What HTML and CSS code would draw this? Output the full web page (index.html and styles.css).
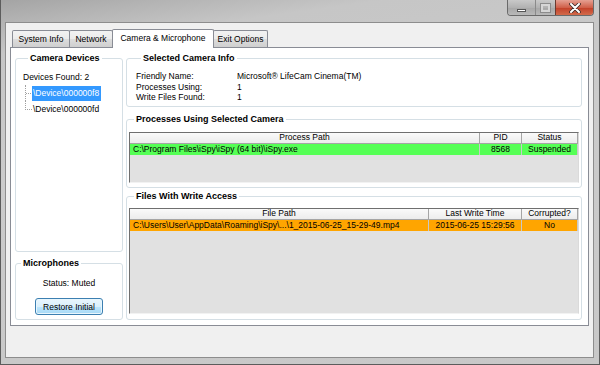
FILE: index.html
```html
<!DOCTYPE html>
<html>
<head>
<meta name="viewport" content="width=device-width, initial-scale=1">
<title>Camera &amp; Microphone</title>
<link rel="stylesheet" href="styles.css">
</head>
<body>
<div class="window">
  <div class="titlebar">
    <div class="caption">
      <span class="cap min"><i></i></span>
      <span class="cap max"><i></i></span>
      <span class="cap close">
        <svg width="12" height="10" viewBox="0 0 12 10"><path d="M2 1 L10 9 M10 1 L2 9" stroke="#3b2a28" stroke-width="3.6" stroke-linecap="round"/><path d="M2 1 L10 9 M10 1 L2 9" stroke="#fff" stroke-width="2" stroke-linecap="round"/></svg>
      </span>
    </div>
  </div>
  <div class="client">
    <div class="tabs">
      <span class="tab t1">System Info</span>
      <span class="tab t2">Network</span>
      <span class="tab active">Camera &amp; Microphone</span>
      <span class="tab t4">Exit Options</span>
    </div>
    <div class="tabpage">
      <div class="leftcol">
        <fieldset class="group devices">
          <legend>Camera Devices</legend>
          <div class="found">Devices Found: 2</div>
          <ul class="tree">
            <li class="sel"><span>\Device\000000f8</span></li>
            <li><span>\Device\000000fd</span></li>
          </ul>
        </fieldset>
        <fieldset class="group mics">
          <legend>Microphones</legend>
          <div class="status">Status: Muted</div>
          <button type="button" class="btn">Restore Initial</button>
        </fieldset>
      </div>
      <div class="rightcol">
        <fieldset class="group info">
          <legend>Selected Camera Info</legend>
          <div class="props">
            <span>Friendly Name:</span><span>Microsoft&reg; LifeCam Cinema(TM)</span>
            <span>Processes Using:</span><span>1</span>
            <span>Write Files Found:</span><span>1</span>
          </div>
        </fieldset>
        <fieldset class="group procs">
          <legend>Processes Using Selected Camera</legend>
          <div class="list">
            <table>
              <colgroup><col><col style="width:42px"><col style="width:56px"></colgroup>
              <tr><th>Process Path</th><th>PID</th><th>Status</th></tr>
              <tr class="green"><td class="l">C:\Program Files\iSpy\iSpy (64 bit)\iSpy.exe</td><td>8568</td><td>Suspended</td></tr>
            </table>
          </div>
        </fieldset>
        <fieldset class="group files">
          <legend>Files With Write Access</legend>
          <div class="list">
            <table>
              <colgroup><col><col style="width:93px"><col style="width:56px"></colgroup>
              <tr><th>File Path</th><th>Last Write Time</th><th>Corrupted?</th></tr>
              <tr class="orange"><td class="l">C:\Users\User\AppData\Roaming\iSpy\...\1_2015-06-25_15-29-49.mp4</td><td>2015-06-25 15:29:56</td><td>No</td></tr>
            </table>
          </div>
        </fieldset>
      </div>
    </div>
  </div>
</div>
</body>
</html>
```

FILE: styles.css
```css
* {
  box-sizing: border-box;
}

body {
  margin: 0;
  font-family: "Liberation Sans", Arial, sans-serif;
  font-size: 8.5px;
  color: #000;
  background: #fff;
}

.window {
  width: 600px;
  height: 365px;
  display: flex;
  flex-direction: column;
  border: 1px solid #5c5c5c;
  border-top: none;
  background: linear-gradient(172deg, #a4a4a4 0%, #b3b3b3 5%, #c6c6c6 12%, #cbcbcb 40%, #c8c8c8 100%);
}

.titlebar {
  height: 22px;
  display: flex;
  justify-content: flex-end;
  padding-right: 5px;
}

.caption {
  display: flex;
  height: 16px;
  border: 1px solid #6a6a6a;
  border-top: none;
  border-radius: 0 0 4px 4px;
  overflow: hidden;
}

.cap {
  display: flex;
  align-items: center;
  justify-content: center;
  height: 100%;
  border-left: 1px solid #8a8a8a;
}

.cap.min {
  width: 27px;
  border-left: none;
  background: linear-gradient(#c9c9c9, #b2b2b2 50%, #a6a6a6 51%, #b9b9b9);
}

.cap.min i {
  width: 9px;
  height: 3px;
  margin-top: 5px;
  background: #fff;
  border: 1px solid #555;
}

.cap.max {
  width: 20px;
  background: linear-gradient(#c9c9c9, #b2b2b2 50%, #a6a6a6 51%, #b9b9b9);
}

.cap.max i {
  width: 9px;
  height: 8px;
  border: 2px solid #d6d6d6;
  outline: 1px solid #8c8c8c;
}

.cap.close {
  width: 38px;
  border-left-color: #6a3a30;
  background: linear-gradient(#e5a092, #d0604a 50%, #c23f28 51%, #d26a4a);
}

.client {
  flex: 1;
  display: flex;
  flex-direction: column;
  margin: 0 5px 6px 4px;
  border: 1px solid #8d8d8d;
  background: #f0f0f0;
}

.tabs {
  display: flex;
  align-items: flex-end;
  height: 24px;
  padding: 6px 0 0 6px;
}

.tab {
  height: 17px;
  display: flex;
  align-items: center;
  justify-content: center;
  border: 1px solid #898c95;
  border-bottom: none;
  margin-right: -1px;
  background: linear-gradient(#f2f2f2, #ebebeb 50%, #dddddd 51%, #cfcfcf);
  border-radius: 2px 2px 0 0;
}

.tab.t1 {
  width: 58px;
}

.tab.t2 {
  width: 44px;
}

.tab.t4 {
  width: 55px;
}

.tab.active {
  width: 102px;
  height: 19px;
  margin-bottom: -1px;
  position: relative;
  z-index: 1;
  background: #fff;
  padding-bottom: 2px;
}

.tabpage {
  flex: 1;
  display: flex;
  gap: 3px;
  margin: 0 4px 31px 4px;
  padding: 4px 6px 5px 4px;
  border: 1px solid #898c95;
  background: #fff;
}

.group {
  margin: 0;
  padding: 0;
  border: 1px solid #d5dfe5;
  border-radius: 3px;
  min-width: 0;
}

.group legend {
  margin-left: 5px;
  padding: 0 2px;
  font-size: 9px;
  font-weight: bold;
  line-height: 12px;
}

.leftcol {
  width: 108px;
  display: flex;
  flex-direction: column;
  gap: 5px;
}

.devices {
  flex: 1;
  padding: 7px 0 0 7px;
}

.found {
  line-height: 12px;
}

.tree {
  list-style: none;
  margin: 2px 0 0 2px;
  padding: 0;
}

.tree li {
  display: flex;
  align-items: center;
  height: 16px;
}

.tree li::before {
  content: "";
  width: 6px;
  align-self: stretch;
  border-left: 1px dotted #a0a0a0;
  background: linear-gradient(90deg, #a0a0a0 50%, transparent 50%) 0 50% / 2px 1px repeat-x;
}

.tree li:last-child::before {
  align-self: flex-start;
  height: 8px;
  background: none;
  border-bottom: 1px dotted #a0a0a0;
}

.tree li span {
  height: 15px;
  display: flex;
  align-items: center;
  padding: 0 2px 0 1px;
}

.tree li.sel span {
  background: #3399ff;
  color: #fff;
}

.mics {
  height: 63px;
  display: flex;
  flex-direction: column;
  align-items: center;
  padding-top: 8px;
}

.status {
  line-height: 12px;
}

.btn {
  margin-top: 9px;
  width: 68px;
  height: 17px;
  padding: 0;
  font-family: inherit;
  font-size: 8.5px;
  color: #000;
  border: 1px solid #3c7fb1;
  border-radius: 3px;
  background: linear-gradient(#eaf6fd, #d9f0fc 50%, #bee6fd 51%, #a7d9f5);
  box-shadow: inset 0 0 0 1px #e8f6fd;
}

.rightcol {
  flex: 1;
  display: flex;
  flex-direction: column;
}

.info {
  height: 55px;
  padding: 7px 0 0 9px;
}

.props {
  display: grid;
  grid-template-columns: 101px auto;
  line-height: 10.5px;
}

.procs {
  height: 75px;
  margin-top: 6px;
  padding: 7px 2px 0 2px;
}

.files {
  flex: 1;
  margin-top: 2px;
  padding: 6px 2px 5px 2px;
  display: flex;
  flex-direction: column;
}

.list {
  height: 51px;
  background: #e1e1e1;
  border: 1px solid;
  border-color: #6f6f6f #dadada #f2f2f2 #6f6f6f;
}

.files .list {
  flex: 1;
  height: auto;
}

.list table {
  width: 100%;
  border-collapse: collapse;
  table-layout: fixed;
}

.list th {
  height: 10px;
  padding: 0;
  font-weight: normal;
  line-height: 9px;
  border-right: 1px solid #a5a5a5;
  border-bottom: 1px solid #a5a5a5;
  background: linear-gradient(#fafafa, #ececec);
}

.list td {
  height: 12px;
  padding: 0 3px;
  text-align: center;
  white-space: nowrap;
  overflow: hidden;
  border-right: 1px solid #c8c8c8;
}

.list td.l {
  text-align: left;
}

.green td {
  background: #55ff55;
}

.orange td {
  background: #ffa500;
}
```
